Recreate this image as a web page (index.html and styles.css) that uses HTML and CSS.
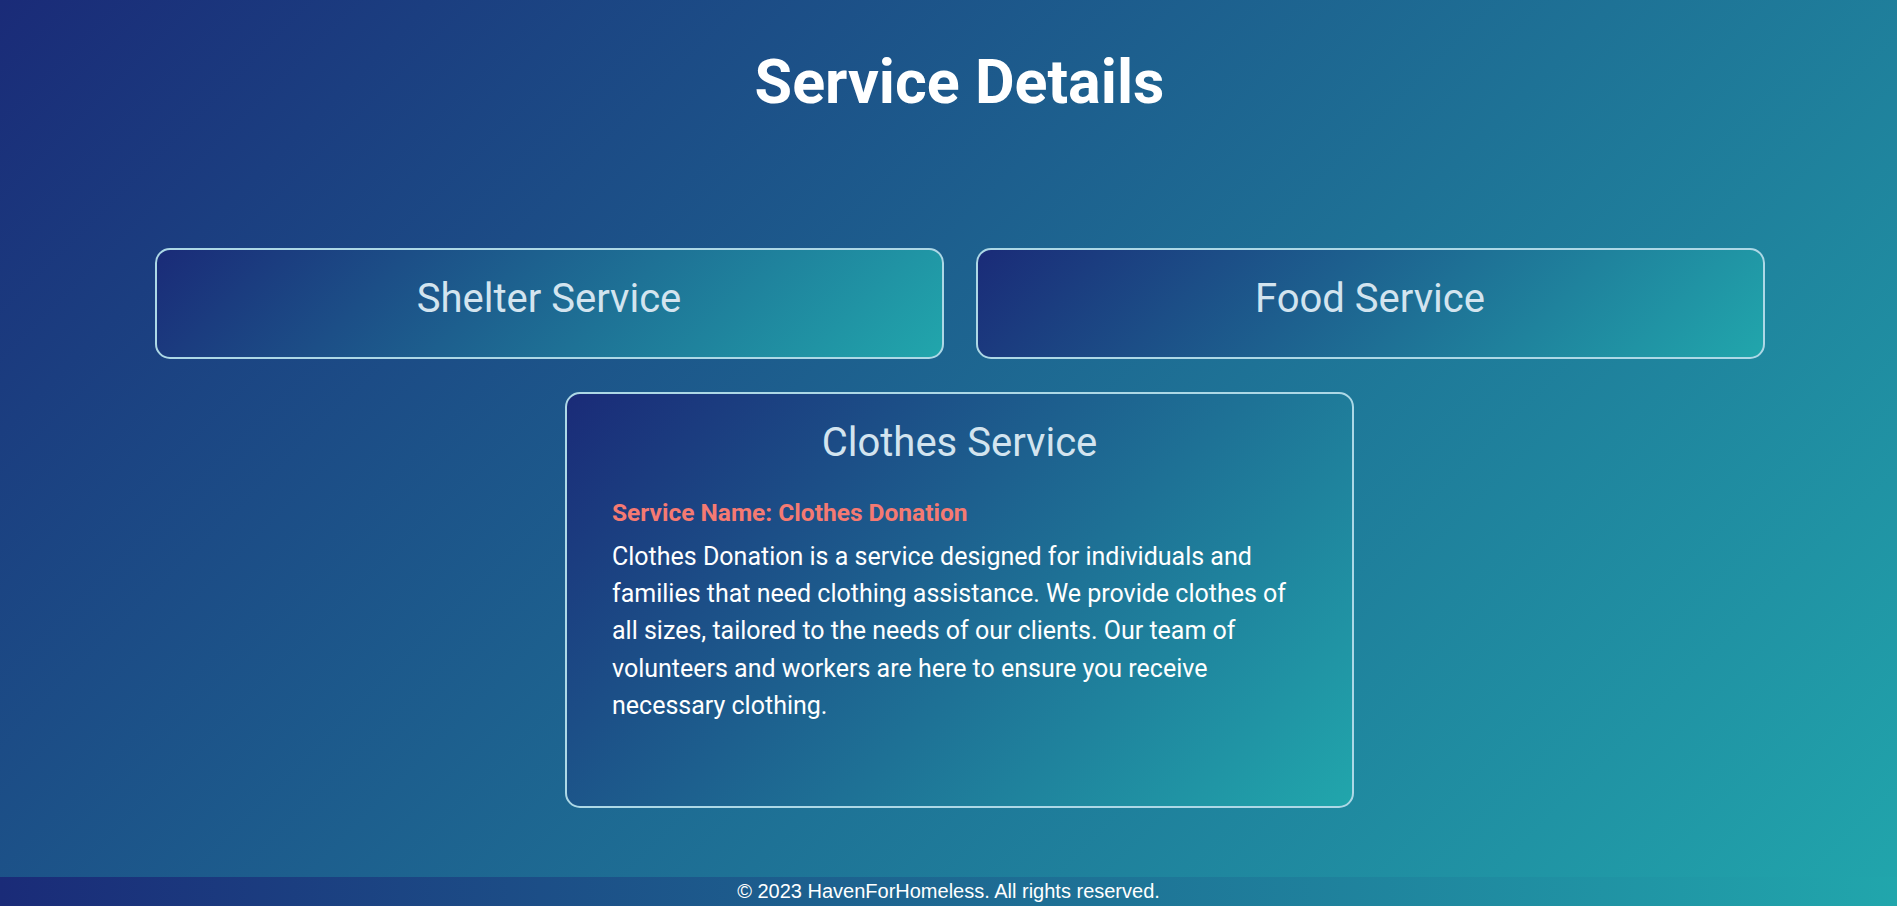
FILE: index.html
```html
<!DOCTYPE html>
<html lang="en">
<head>
    <meta charset="UTF-8">
    <meta name="viewport" content="width=device-width, initial-scale=1.0">
    <title>HavenForHomeless - Service Details</title>
    <link rel="stylesheet" href="styles.css">
</head>
<body>
    <main class="page">
        <h1 class="page-title">Service Details</h1>
        <div class="services">
            <div class="service-card">
                <h2 class="service-title">Shelter Service</h2>
            </div>
            <div class="service-card">
                <h2 class="service-title">Food Service</h2>
            </div>
            <div class="service-card">
                <h2 class="service-title">Clothes Service</h2>
                <div class="service-details">
                    <h3 class="service-name">Service Name: Clothes Donation</h3>
                    <p class="service-text">Clothes Donation is a service designed for individuals and families that need clothing assistance. We provide clothes of all sizes, tailored to the needs of our clients. Our team of volunteers and workers are here to ensure you receive necessary clothing.</p>
                </div>
            </div>
        </div>
    </main>
    <footer class="footer">
        &copy; 2023 HavenForHomeless. All rights reserved.
    </footer>
</body>
</html>
```

FILE: styles.css
```css
html {
    background-color: #fff;
}
body {
    font-family: 'Roboto', 'Liberation Sans', sans-serif;
    background: linear-gradient(135deg, #1a2b78, #21a6ac);
    color: #fff;
    margin: 0;
    padding: 0;
    min-height: calc(100vh - 1px);
    display: flex;
    flex-direction: column;
}
.page {
    flex: 1;
    padding: 46px 0 0 22px;
    text-align: center;
}
.page-title {
    font-size: 61px;
    font-weight: bold;
    margin: 0 0 130px;
}
.services {
    display: flex;
    flex-wrap: wrap;
    justify-content: center;
    gap: 33px 32px;
}
.service-card {
    box-sizing: border-box;
    width: 789px;
    padding: 25px;
    border: 2px solid #add8e6;
    border-radius: 15px;
    background: linear-gradient(135deg, #1a2b78, #21a6ac);
}
.service-title {
    font-size: 40px;
    font-weight: normal;
    color: #d3e4ef;
    margin: 0 0 10px;
}
.service-details {
    text-align: left;
    padding: 22px 20px 57px;
}
.service-name {
    font-size: 24.5px;
    font-weight: bold;
    color: #f57a72;
    margin: 0 0 11px;
}
.service-text {
    font-size: 25px;
    line-height: 37.2px;
    margin: 0;
}
.footer {
    font-family: 'Liberation Sans', Arial, sans-serif;
    font-size: 20px;
    line-height: 23px;
    padding: 3px 0;
    text-align: center;
    background: linear-gradient(90deg, #1a2b78, #21a6ac);
}
```
